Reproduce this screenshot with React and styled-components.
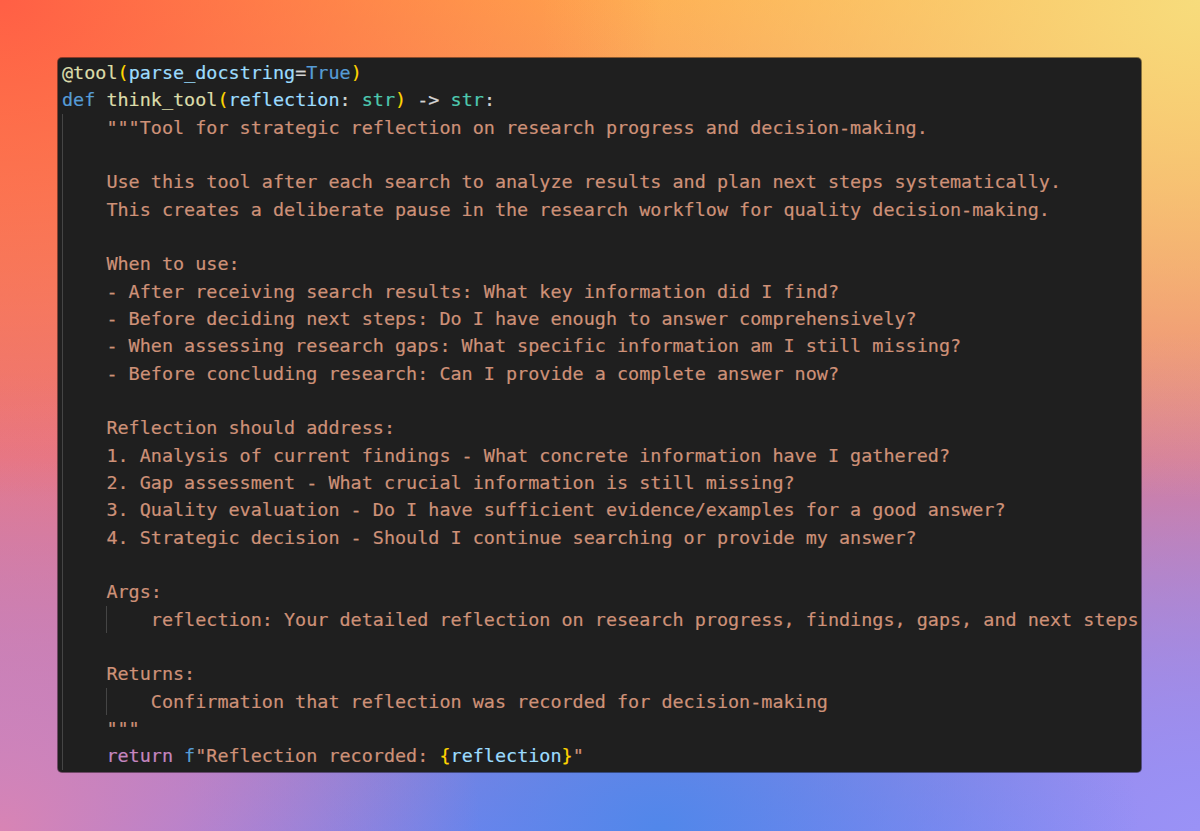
import React from "react";
import styled, { createGlobalStyle } from "styled-components";

const Global = createGlobalStyle`
  html, body {
    margin: 0;
    padding: 0;
  }
  #root {
    width: 1200px;
    height: 831px;
  }
`;

const Backdrop = styled.div`
  box-sizing: border-box;
  width: 1200px;
  height: 831px;
  display: flex;
  padding: 58px 59px 59px 58px;
  background:
    radial-gradient(ellipse 55% 60% at 0% 0%, #ff5f45 0%, rgba(255, 95, 69, 0) 100%),
    radial-gradient(ellipse 55% 60% at 100% 0%, #f7dc7c 0%, rgba(247, 220, 124, 0) 100%),
    radial-gradient(ellipse 40% 55% at 0% 100%, #d884b4 0%, rgba(216, 132, 180, 0) 100%),
    radial-gradient(ellipse 40% 45% at 55% 100%, #5187ea 0%, rgba(81, 135, 234, 0) 100%),
    radial-gradient(ellipse 45% 60% at 100% 100%, #9a92f6 0%, rgba(154, 146, 246, 0) 100%),
    linear-gradient(180deg, #ffa84e 0%, #e87680 55%, #8a80ee 100%);
`;

const Editor = styled.div`
  flex: 1;
  box-sizing: border-box;
  padding: 1px 0 0 4px;
  background: #1f1f1f;
  border-radius: 4px;
  box-shadow: 0 0 0 1px rgba(0, 0, 0, 0.45);
  overflow: hidden;
  font-family: "DejaVu Sans Mono", "Liberation Mono", monospace;
  font-size: 18.44px;
  color: #d4d4d4;
  -webkit-text-stroke: 0.2px currentColor;
`;

const Line = styled.div`
  display: flex;
  height: 27.33px;
  line-height: 27.33px;
  white-space: pre;
`;

const Guide = styled.span`
  display: inline-block;
  flex: none;
  width: 4ch;
  height: 100%;
  box-shadow: ${(p) => (p.$on ? "inset 1px 0 0 #454545" : "none")};
`;

const Tok = styled.span`
  color: ${(p) => p.$c};
`;

const C = {
  str: "#ce9178",
  fn: "#dcdcaa",
  br: "#ffd700",
  var: "#9cdcfe",
  op: "#d4d4d4",
  kw: "#569cd6",
  ty: "#4ec9b0",
  ctl: "#c586c0",
};

const doc = (t) => [[t, C.str]];

// [guides, tokens]; guides: one flag per indent level
const lines = [
  [[], [["@tool", C.fn], ["(", C.br], ["parse_docstring", C.var], ["=", C.op], ["True", C.kw], [")", C.br]]],
  [[], [["def", C.kw], [" think_tool", C.fn], ["(", C.br], ["reflection", C.var], [": ", C.op], ["str", C.ty], [")", C.br], [" -> ", C.op], ["str", C.ty], [":", C.op]]],
  [[true], doc('"""Tool for strategic reflection on research progress and decision-making.')],
  [[true], []],
  [[true], doc("Use this tool after each search to analyze results and plan next steps systematically.")],
  [[true], doc("This creates a deliberate pause in the research workflow for quality decision-making.")],
  [[true], []],
  [[true], doc("When to use:")],
  [[true], doc("- After receiving search results: What key information did I find?")],
  [[true], doc("- Before deciding next steps: Do I have enough to answer comprehensively?")],
  [[true], doc("- When assessing research gaps: What specific information am I still missing?")],
  [[true], doc("- Before concluding research: Can I provide a complete answer now?")],
  [[true], []],
  [[true], doc("Reflection should address:")],
  [[true], doc("1. Analysis of current findings - What concrete information have I gathered?")],
  [[true], doc("2. Gap assessment - What crucial information is still missing?")],
  [[true], doc("3. Quality evaluation - Do I have sufficient evidence/examples for a good answer?")],
  [[true], doc("4. Strategic decision - Should I continue searching or provide my answer?")],
  [[true], []],
  [[true], doc("Args:")],
  [[true, true], doc("reflection: Your detailed reflection on research progress, findings, gaps, and next steps")],
  [[true], []],
  [[true], doc("Returns:")],
  [[true, true], doc("Confirmation that reflection was recorded for decision-making")],
  [[true], doc('"""')],
  [[true], [["return", C.ctl], [" ", C.op], ["f", C.kw], ['"Reflection recorded: ', C.str], ["{", C.br], ["reflection", C.var], ["}", C.br], ['"', C.str]]],
];

const App = () => {
  return (
    <>
      <Global />
      <Backdrop>
        <Editor>
          {lines.map(([guides, toks], i) => (
            <Line key={i}>
              {guides.map((g, j) => (
                <Guide key={j} $on={g} />
              ))}
              {toks.map(([t, c], k) => (
                <Tok key={k} $c={c}>
                  {t}
                </Tok>
              ))}
            </Line>
          ))}
        </Editor>
      </Backdrop>
    </>
  );
};

export default App;
